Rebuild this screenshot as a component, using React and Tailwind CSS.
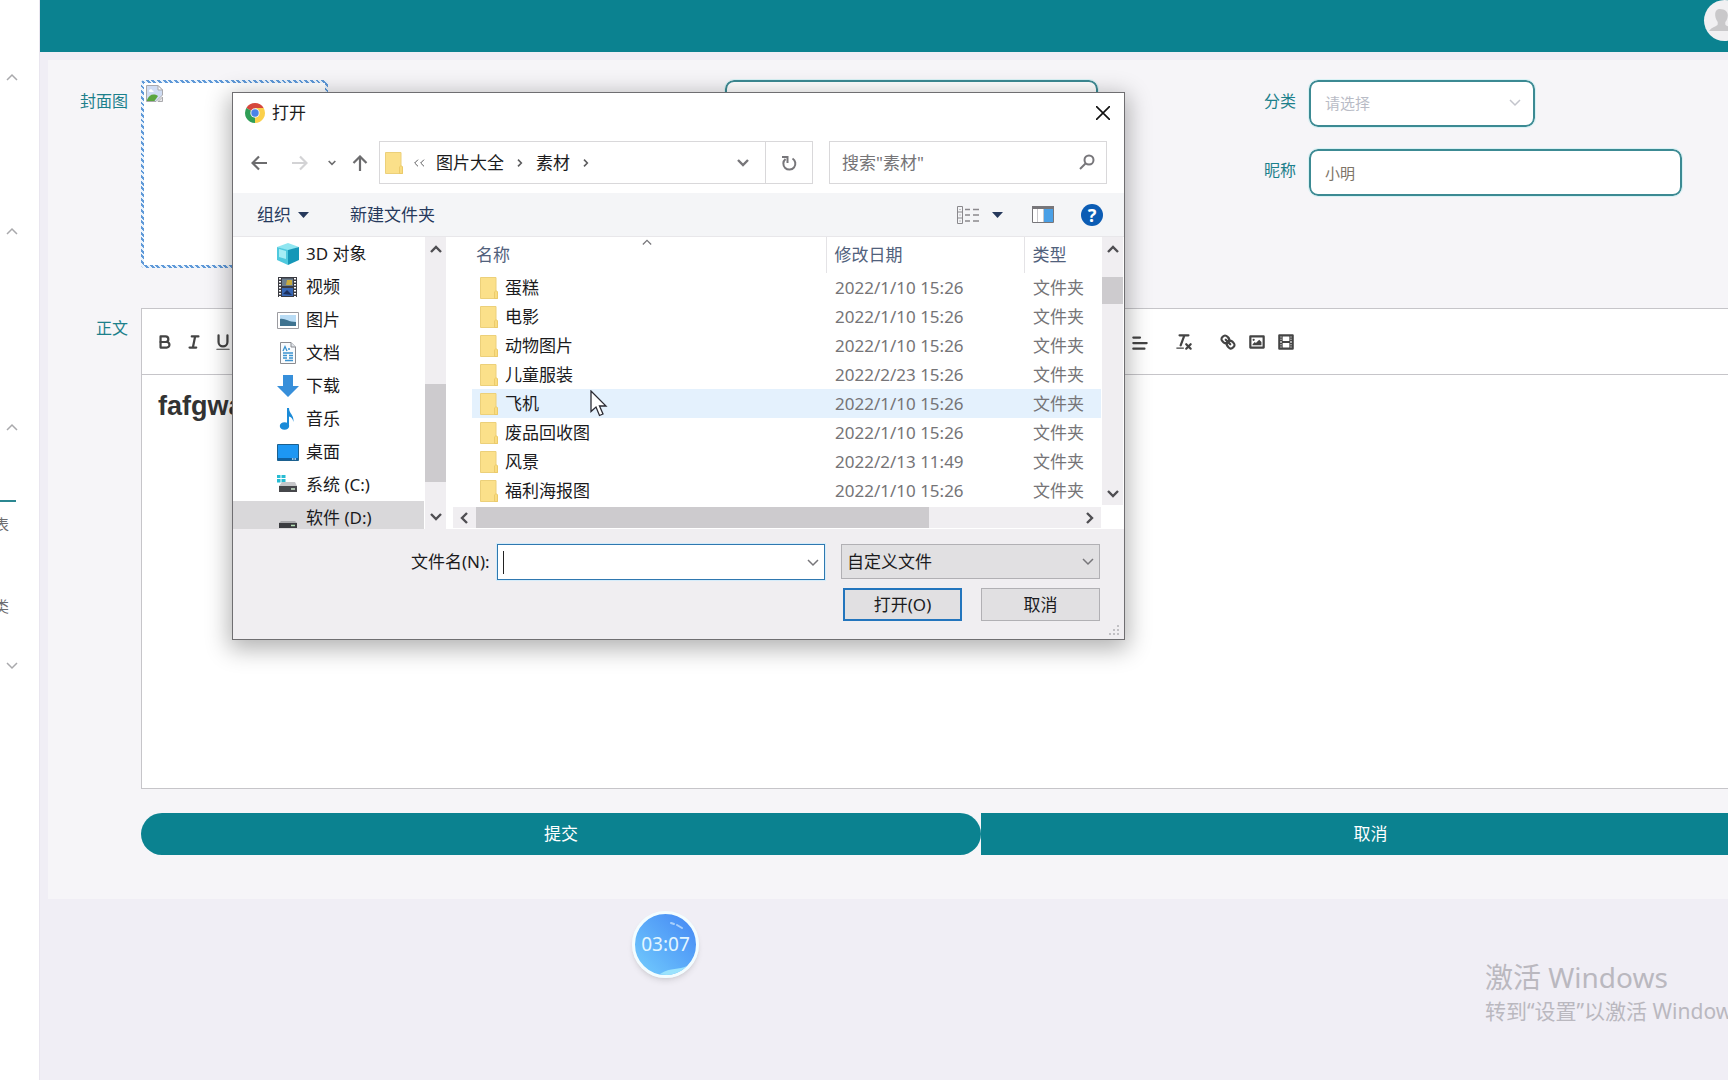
import clsx from 'clsx';

const treeItems = [
  { name: '3D 对象', icon: 'cube' },
  { name: '视频', icon: 'video' },
  { name: '图片', icon: 'picture' },
  { name: '文档', icon: 'doc' },
  { name: '下载', icon: 'download' },
  { name: '音乐', icon: 'music' },
  { name: '桌面', icon: 'desktop' },
  { name: '系统 (C:)', icon: 'system' },
  { name: '软件 (D:)', icon: 'disk', active: true },
];

const files = [
  { name: '蛋糕', date: '2022/1/10 15:26' },
  { name: '电影', date: '2022/1/10 15:26' },
  { name: '动物图片', date: '2022/1/10 15:26' },
  { name: '儿童服装', date: '2022/2/23 15:26' },
  { name: '飞机', date: '2022/1/10 15:26', hovered: true },
  { name: '废品回收图', date: '2022/1/10 15:26' },
  { name: '风景', date: '2022/2/13 11:49' },
  { name: '福利海报图', date: '2022/1/10 15:26' },
];

const App = () => {
  return (
    <div className="relative flex min-h-screen overflow-hidden bg-[#f0eef5] font-['Noto_Sans','Noto_Sans_CJK_SC',sans-serif]">
      <Sidebar />

      <main className="-mr-8 flex-1 min-w-0">
        <header className="h-[52px] bg-[#0b8290] flex justify-end px-[15px]">
          <button aria-label="user" className="size-[41px] rounded-full bg-[#f1f0f2] overflow-hidden">
            <svg viewBox="0 0 41 41" className="size-full" fill="#c9c8ca">
              <path d="M16 9c-4 0-5 3-4.800 6.500.2 3 1.500 5 2.500 6.500v2.500c-1 2-6 2.500-8.700 6.500h26c-2.700-4-8.700-4.500-9.700-6.500V22c1.500-1.500 2.300-3.500 2.500-6.500C24 12 21 9 16 9z" />
            </svg>
          </button>
        </header>

        {/* form */}
        <form className="ml-2 -mr-10 mt-2 pt-5 pb-11 bg-[#f6f5f8]">
          <div className="grid grid-cols-3 items-start">
            <Field label="封面图" id="cover">
              <button
                id="cover"
                type="button"
                className="h-[188px] w-[187px] p-[3px] rounded bg-[repeating-linear-gradient(45deg,#5f99d8_0_2px,#eaf3fc_2px_4px)]"
              >
                <span className="flex size-full items-start bg-white p-[2px]">
                  <BrokenImage />
                </span>
              </button>
            </Field>

            <div className="pl-[93px]">
              <input aria-label="标题" className="h-[47px] w-[373px] rounded-[9px] border-2 border-[#3c8a93] bg-white outline outline-[#d8f2f5]" />
            </div>

            <div className="flex flex-col gap-[22px]">
              <Field label="分类" id="category">
                <div className="relative w-[226px]">
                  <select
                    id="category"
                    className="h-[47px] w-full appearance-none rounded-[9px] border-2 border-[#3c8a93] bg-white px-[14px] text-[15px] text-[#b9bcc6] outline outline-[#d8f2f5]"
                  >
                    <option>请选择</option>
                  </select>
                  <Chevron dir="down" className="absolute right-[14px] top-[17px] size-3 text-[#c3c5cc]" />
                </div>
              </Field>
              <Field label="昵称" id="nickname">
                <input
                  id="nickname"
                  defaultValue="小明"
                  className="h-[47px] w-[373px] rounded-[9px] border-2 border-[#3c8a93] bg-white px-[14px] text-[15px] text-[#7d7467] outline outline-[#d8f2f5]"
                />
              </Field>
            </div>
          </div>

          {/* editor */}
          <div className="mt-10 flex">
            <span className="h-10 w-[93px] shrink-0 pr-[13px] text-right text-base leading-10 text-[#1c808b]">正文</span>
            <div className="flex-1 border border-[#c6c5c9] bg-white">
              <Toolbar />
              <div className="h-[413px] px-4 py-[15px] font-['Liberation_Sans',sans-serif] text-[27px] leading-8 font-bold text-[#333]">
                fafgwa
              </div>
            </div>
          </div>

          <div className="mt-6 flex pl-[93px] pr-10 text-[17px] text-white">
            <button type="submit" className="h-[42px] w-[840px] rounded-full bg-[#0b8290]">提交</button>
            <button type="button" className="h-[42px] flex-1 bg-[#0b8290]">取消</button>
          </div>
        </form>
      </main>

      <FileDialog />

      {/* recorder timer */}
      <div className="absolute left-[632px] top-[911px] size-[67px] rounded-full border-[3px] border-[#f3fdff] bg-linear-to-tr from-[#74cdfd] to-[#4585f3] shadow-md">
        <svg viewBox="0 0 61 61" className="absolute inset-0 size-full" fill="none">
          <path d="M25 60C36 53 44 56 52 52C46 58 36 63 25 60Z" fill="#9be3fd" />
          <path d="M36 9l3 1M42 11l5 3" stroke="#a9d0fc" strokeWidth="2" strokeLinecap="round" />
        </svg>
        <span className="relative flex size-full items-center justify-center text-[19px] text-[#e2f6ff]">03:07</span>
      </div>

      {/* windows watermark */}
      <div className="absolute left-[1485px] top-[959px] whitespace-nowrap text-[#bab8bf]">
        <p className="text-[28px] leading-9">激活 Windows</p>
        <p className="text-[21px] leading-8">转到“设置”以激活 Windows。</p>
      </div>
    </div>
  )
}

export default App


const Field = ({ label, id, children }) => {
  return (
    <div className="flex items-start">
      <label htmlFor={id} className="h-[42px] w-[93px] shrink-0 pr-[13px] text-right text-base leading-[42px] text-[#1c808b]">
        {label}
      </label>
      {children}
    </div>
  )
}

const Sidebar = () => {
  return (
    <nav className="flex w-10 shrink-0 flex-col border-r border-[#e9e6ef] bg-white text-[#a9a9ac]">
      <SideToggle dir="up" className="h-[154px]" />
      <SideToggle dir="up" className="h-[154px]" />
      <SideToggle dir="up" className="h-[192px] pt-[46px]" />
      <span className="h-[2px] w-4 bg-[#2b8791]" />
      <SideLink text="表" className="h-11" />
      <SideLink text="类" className="h-[120px]" />
      <SideToggle dir="down" className="-mt-6 h-12" />
    </nav>
  )
}

const SideToggle = ({ dir, className }) => (
  <button aria-label={dir} className={clsx('flex items-center pl-[6px]', className)}>
    <Chevron dir={dir} className="size-3" />
  </button>
)

const SideLink = ({ text, className }) => (
  <a href="#" className={clsx('flex w-[9px] items-center justify-end overflow-hidden text-[15px] text-[#6d6d70]', className)}>
    <span className="shrink-0">{text}</span>
  </a>
)

const Toolbar = () => {
  return (
    <div className="flex h-[66px] items-center border-b border-[#c6c5c9] px-2">
      <ToolButton name="bold">
        <path d="M5,4H9.500A2.500,2.500,0,0,1,12,6.500v0A2.500,2.500,0,0,1,9.500,9H5V4Z" />
        <path d="M5,9h5.500A2.500,2.500,0,0,1,13,11.500v0A2.500,2.500,0,0,1,10.500,14H5V9Z" />
      </ToolButton>
      <ToolButton name="italic">
        <path d="M7,4H13M5,14H11M8,14L10,4" />
      </ToolButton>
      <ToolButton name="underline">
        <path d="M5,3V9a4,4,0,0,0,4,4H9a4,4,0,0,0,4-4V3" />
        <rect x="3" y="15" width="12" height="1" rx=".5" fill="#444" stroke="none" />
      </ToolButton>
      <span className="w-[888px] shrink-0" />
      <ToolButton name="align">
        <path d="M3,10H15M3,15H13M3,5H9" />
      </ToolButton>
      <span className="w-[15px]" />
      <ToolButton name="clean">
        <path d="M5,3H13M6,12L9.350,3M11,11L15,15M15,11L11,15" />
        <rect x="2" y="14" width="7" height="1" rx=".5" fill="#444" stroke="none" />
      </ToolButton>
      <span className="w-[15px]" />
      <ToolButton name="link">
        <path d="M7,7L11,11" />
        <path d="M8.900,4.577a3.476,3.476,0,0,1,.36,4.679A3.476,3.476,0,0,1,4.577,8.900C3.185,7.500,2.035,6.400,4.217,4.217S7.500,3.185,8.900,4.577Z" />
        <path d="M13.423,9.100a3.476,3.476,0,0,0-4.679-.36,3.476,3.476,0,0,0,.36,4.679c1.392,1.392,2.500,2.542,4.679.36S14.815,10.500,13.423,9.100Z" />
      </ToolButton>
      <ToolButton name="image">
        <rect x="3" y="4" width="12" height="10" />
        <circle cx="6" cy="7" r="1" fill="#444" stroke="none" />
        <path d="M5 12V11L7 9L8 10L11 7L13 9V12Z" fill="#444" stroke="none" />
      </ToolButton>
      <ToolButton name="video">
        <rect x="3" y="3" width="12" height="12" />
        <path d="M5 3h1v12H5zM12 3h1v12h-1zM5 8h8v2H5zM3 5h3v1H3zM3 7h3v1H3zM3 10h3v1H3zM3 12h3v1H3zM12 5h3v1h-3zM12 7h3v1h-3zM12 10h3v1h-3zM12 12h3v1h-3z" fill="#444" stroke="none" />
      </ToolButton>
    </div>
  )
}

const ToolButton = ({ name, children }) => (
  <button type="button" aria-label={name} className="flex w-[29px] shrink-0 justify-center">
    <svg viewBox="0 0 18 18" className="size-5" fill="none" stroke="#444" strokeWidth="2" strokeLinecap="round" strokeLinejoin="round">
      {children}
    </svg>
  </button>
)

const FileDialog = () => {
  return (
    <div
      role="dialog"
      aria-label="打开"
      className="absolute left-[232px] top-[92px] flex w-[893px] flex-col border border-[#6f6e71] bg-white text-[17px] leading-6 text-[#1b1b1d] shadow-[0_6px_22px_3px_rgba(0,0,0,0.3)]"
    >
      {/* title bar */}
      <div className="flex h-[39px] items-center gap-[7px] pl-3 pr-[14px]">
        <ChromeLogo />
        <span className="flex-1">打开</span>
        <button aria-label="关闭">
          <svg viewBox="0 0 14 14" className="size-[14px]" stroke="#111" strokeWidth="1.600">
            <path d="M0 0L14 14M14 0L0 14" />
          </svg>
        </button>
      </div>

      {/* address row */}
      <div className="flex h-[61px] items-center pl-[18px] pr-[17px]">
        <div className="flex w-32 items-center">
          <button aria-label="后退"><Arrow className="size-4 text-[#6c6c6e]" /></button>
          <button aria-label="前进" className="ml-[25px]"><Arrow className="size-4 rotate-180 text-[#d3d3d5]" /></button>
          <button aria-label="最近" className="ml-5"><Chevron dir="down" className="size-2 text-[#6c6c6e]" bold /></button>
          <button aria-label="向上" className="ml-4"><Arrow className="size-4 rotate-90 text-[#6c6c6e]" /></button>
        </div>
        <div className="flex h-[43px] flex-1 items-center border border-[#d9d8da]">
          <Folder className="ml-[5px] mr-[9px]" />
          <Chevron dir="left" className="-mr-[2px] size-2 text-[#5c5c5e]" />
          <Chevron dir="left" className="size-2 text-[#5c5c5e]" />
          <span className="ml-[10px]">图片大全</span>
          <Chevron dir="right" className="mx-3 size-2 text-[#5c5c5e]" bold />
          <span>素材</span>
          <Chevron dir="right" className="mx-3 size-2 text-[#5c5c5e]" bold />
          <button aria-label="展开" className="ml-auto mr-4"><Chevron dir="down" className="size-3 text-[#77767a]" bold /></button>
          <button aria-label="刷新" className="flex h-full w-[47px] items-center justify-center border-l border-[#d9d8da]">
            <svg viewBox="0 0 16 16" className="size-4" fill="none" stroke="#77767a" strokeWidth="2">
              <path d="M11.500 3.500A6 6 0 1 1 4.500 4M1 2H6.500V8" />
            </svg>
          </button>
        </div>
        <div className="relative ml-4 w-[278px]">
          <input
            aria-label="搜索"
            placeholder={'搜索"素材"'}
            className="h-[43px] w-full border border-[#d9d8da] px-3 placeholder:text-[#757477] placeholder:opacity-100"
          />
          <svg viewBox="0 0 16 16" className="absolute right-3 top-[13px] size-4" fill="none" stroke="#77767a" strokeWidth="2">
            <circle cx="10" cy="6" r="4.500" />
            <path d="M6.500 9.500L1 15" />
          </svg>
        </div>
      </div>

      {/* command bar */}
      <div className="flex h-[44px] items-center border-b border-[#e8e7ea] bg-[#f4f5f7] pl-6 pr-[21px] text-[#26395c]">
        <button className="flex items-center gap-[7px]">组织 <Triangle /></button>
        <button className="ml-[41px] mr-auto">新建文件夹</button>
        <button aria-label="视图" className="flex items-center gap-3">
          <svg viewBox="0 0 24 20" className="h-5 w-6" fill="none" stroke="#8a898d">
            <path d="M1.500 1.500h5v17h-5zM1.500 7h5M1.500 13h5M3.500 4.500h1M3.500 10h1M3.500 16h1" />
            <path d="M9 4.500h5M17 4.500h6M9 10h5M17 10h6M9 16h5M17 16h6" strokeWidth="1.500" />
          </svg>
          <Triangle />
        </button>
        <button aria-label="预览窗格" className="ml-[29px]">
          <svg viewBox="0 0 22 17" className="h-[17px] w-[22px]">
            <path d="M.5.5h21v16H.5z" fill="#fff" stroke="#77767a" />
            <path d="M0 0h22v3H0z" fill="#77767a" />
            <path d="M5.500 3v13M11.500 3v13" stroke="#c9c8cc" />
            <path d="M12 3h9v13h-9z" fill="#4aa0e6" />
          </svg>
        </button>
        <button aria-label="帮助" className="ml-[27px] size-[22px] rounded-full bg-[#0b5cb4] text-lg leading-[22px] font-bold text-white">?</button>
      </div>

      {/* body */}
      <div className="flex h-[292px]">
        <ul className="w-[191px] overflow-hidden">
          {treeItems.map((item) => (
            <li key={item.name} className={clsx('flex h-[33px] items-center gap-[7px] pl-11', item.active && 'bg-[#d9d8da]')}>
              <TreeIcon name={item.icon} />
              <span>{item.name}</span>
            </li>
          ))}
        </ul>

        <div className="mr-[7px] ml-px flex w-[21px] flex-col items-center bg-[#f0eef1] pt-[6px] pb-[6px]">
          <Chevron dir="up" className="size-3 text-[#4f4e52]" bold />
          <div className="mt-auto mb-[29px] h-[98px] w-full bg-[#cdcbce]" />
          <Chevron dir="down" className="size-3 text-[#4f4e52]" bold />
        </div>

        <div className="flex-1">
          <div className="flex">
            <div className="relative flex-1 pl-[19px]">
              <Chevron dir="up" className="absolute left-[189px] top-0 size-[10px] text-[#77767a]" />
              <table className="w-full table-fixed">
                <thead>
                  <tr className="h-9 text-left text-[#51617c]">
                    <th className="pl-1 font-normal">名称</th>
                    <th className="w-[198px] border-l border-[#e4e3e6] pl-2 font-normal">修改日期</th>
                    <th className="w-[77px] border-l border-[#e4e3e6] pl-2 font-normal">类型</th>
                  </tr>
                </thead>
                <tbody>
                  {files.map((file) => (
                    <tr key={file.name} className={clsx('h-[29px]', file.hovered && 'bg-[#e4f1fd]')}>
                      <td className="py-0 pl-2">
                        <div className="flex items-center gap-[7px]">
                          <Folder />
                          {file.name}
                        </div>
                      </td>
                      <td className="py-0 pl-[9px] text-[#757477]">{file.date}</td>
                      <td className="py-0 pl-[9px] text-[#757477]">文件夹</td>
                    </tr>
                  ))}
                </tbody>
              </table>
            </div>
            <div className="mx-px flex w-[21px] flex-col items-center bg-[#f0eef1] pt-[6px] pb-[5px]">
              <Chevron dir="up" className="size-3 text-[#4f4e52]" bold />
              <div className="mt-[22px] mb-auto h-[27px] w-full bg-[#cdcbce]" />
              <Chevron dir="down" className="size-3 text-[#4f4e52]" bold />
            </div>
          </div>
          <div className="mt-[2px] mr-[23px] flex h-[21px] items-center bg-[#f0eef1] px-[5px]">
            <Chevron dir="left" className="size-3 text-[#4f4e52]" bold />
            <div className="ml-[6px] mr-auto h-full w-[453px] bg-[#cdcbce]" />
            <Chevron dir="right" className="size-3 text-[#4f4e52]" bold />
          </div>
        </div>
      </div>

      {/* footer */}
      <div className="relative bg-[#f0eef1] pt-[15px] pr-6 pb-[18px] pl-[178px]">
        <div className="flex items-start">
          <label htmlFor="filename" className="w-[86px] leading-[35px]">文件名(N):</label>
          <div className="relative flex-1">
            <input id="filename" className="h-9 w-full border border-[#2f78b0] bg-white px-2 outline outline-[#d5ecfa]" />
            <span className="absolute left-[6px] top-[7px] h-[23px] w-px bg-[#222]" />
            <Chevron dir="down" className="absolute right-[6px] top-[13px] size-3 text-[#77767a]" />
          </div>
          <div className="relative ml-4 w-[259px]">
            <select aria-label="文件类型" className="h-[35px] w-full appearance-none border border-[#b1b0b4] bg-[#e1e0e2] px-[5px] leading-6">
              <option>自定义文件</option>
            </select>
            <Chevron dir="down" className="absolute right-[6px] top-3 size-3 text-[#77767a]" />
          </div>
        </div>
        <div className="mt-2 flex justify-end gap-[19px]">
          <button className="h-[33px] w-[119px] border-2 border-[#2375bd] bg-[#e1e0e2]">打开(O)</button>
          <button className="h-[33px] w-[119px] border border-[#b1b0b4] bg-[#e1e0e2]">取消</button>
        </div>
        <svg viewBox="0 0 12 12" className="absolute right-1 bottom-[2px] size-3" fill="#c1c0c4">
          <path d="M9 0h2v2H9zM5 4h2v2H5zM9 4h2v2H9zM1 8h2v2H1zM5 8h2v2H5zM9 8h2v2H9z" />
        </svg>
      </div>

      <svg viewBox="0 0 18 28" className="absolute left-[357px] top-[297px] h-7 w-[18px]" fill="#fff" stroke="#2b2b33" strokeWidth="1.300">
        <path d="M1 1V21.500L6 17L9.500 25.500L13 24L9.500 16H16Z" />
      </svg>
    </div>
  )
}

const chevronPaths = {
  up: 'M1 9L6 4L11 9',
  down: 'M1 3L6 8L11 3',
  left: 'M9 1L4 6L9 11',
  right: 'M3 1L8 6L3 11',
};

const Chevron = ({ dir, className, bold }) => (
  <svg viewBox="0 0 12 12" className={clsx('shrink-0', className)} fill="none" stroke="currentColor" strokeWidth={bold ? 2.4 : 1.5}>
    <path d={chevronPaths[dir]} />
  </svg>
)

const Triangle = () => (
  <svg viewBox="0 0 11 6" className="h-[6px] w-[11px]" fill="#26395c">
    <path d="M0 0H11L5.500 6Z" />
  </svg>
)

const Arrow = ({ className }) => (
  <svg viewBox="0 0 16 16" className={className} fill="none" stroke="currentColor" strokeWidth="2.200">
    <path d="M16 8H1.500M8 1.500L1.500 8L8 14.500" />
  </svg>
)

const Folder = ({ className }) => (
  <svg viewBox="0 0 18 22" className={clsx('h-[22px] w-[18px] shrink-0', className)}>
    <path d="M.5.5H16V13.500L17.500 15V21.500H.5Z" fill="#fbe08a" stroke="#ecd07a" />
    <path d="M14.500 21.500V15L16 13.500L17.500 15V21.500Z" fill="#f9dc80" stroke="#e8c766" strokeWidth=".8" />
  </svg>
)

const ChromeLogo = () => (
  <svg viewBox="0 0 20 20" className="size-5">
    <path d="M10 10L1.340 5A10 10 0 0 1 18.660 5Z" fill="#d5473c" />
    <path d="M10 10L1.340 5A10 10 0 0 0 10 20L14.500 12Z" fill="#2f9e56" />
    <path d="M10 10L10 20A10 10 0 0 0 18.660 5H10Z" fill="#fbd04b" />
    <circle cx="10" cy="10" r="4.700" fill="#f3f3f3" />
    <circle cx="10" cy="10" r="3.700" fill="#4a83e8" />
  </svg>
)

const BrokenImage = () => (
  <svg viewBox="0 0 17 17" className="size-[17px]">
    <path d="M.5.5H12L16.500 5V10L10 16.500H.5Z" fill="#cfdcf3" stroke="#a9a9ad" />
    <path d="M12 .5V5H16.500Z" fill="#fff" stroke="#a9a9ad" />
    <path d="M3 6C3 4 6 3.500 6.500 5.500C8 5.500 8 7 7 7H3.500Z" fill="#fff" />
    <path d="M1 15C3 10 7 8 12 11L8.500 16H1Z" fill="#5aa63f" />
    <path d="M16.500 12V16.500H12Z" fill="#e8e8ea" stroke="#a9a9ad" />
  </svg>
)

const TreeIcon = ({ name }) => (
  <svg viewBox="0 0 22 22" className="size-[22px] shrink-0">
    {name === 'cube' && (
      <>
        <path d="M0 4L11 0L22 4L11 8Z" fill="#8fe6f1" />
        <path d="M0 4L11 7V22L0 17Z" fill="#4fc9de" />
        <path d="M22 4L11 7V22L22 17Z" fill="#1597b8" />
        <path d="M2 6L9 8V16L2 14Z" fill="#a5edf5" />
      </>
    )}
    {name === 'video' && (
      <>
        <path d="M1 1H20V21H1Z" fill="#3a3b42" />
        <path d="M5 2.500H16V10H5Z" fill="#6d7f8e" />
        <path d="M5 12H16V20H5Z" fill="#3867b4" />
        <path d="M10 4H15V9H9Z" fill="#c9ab3c" />
        <path d="M6 18L10 14L15 19Z" fill="#1c2f5c" />
        <path d="M3 2V21M18 2V21" stroke="#fff" strokeWidth="2" strokeDasharray="1.500 1.500" />
      </>
    )}
    {name === 'picture' && (
      <>
        <path d="M.5 3.500H21.500V19.500H.5Z" fill="#fff" stroke="#9c9ca1" />
        <path d="M3 6H19V17H3Z" fill="#b9dcf5" />
        <path d="M3 10C8 9 11 13 19 13V17H3Z" fill="#3f7390" />
      </>
    )}
    {name === 'doc' && (
      <>
        <path d="M3.500.5H14L18.500 5V21.500H3.500Z" fill="#f9fbfd" stroke="#8b8c91" />
        <path d="M14 .5V5H18.500" fill="#dfe4ea" stroke="#8b8c91" />
        <path d="M6 9L8 4.500L10 9M11 7H13M6 11H16M6 13.500H10M12 13.500H16M6 16H10M12 16H16M8 18.500H16" stroke="#3b93d0" strokeWidth="1.300" fill="none" />
      </>
    )}
    {name === 'download' && <path d="M6 0H16V11H22L11 22L0 11H6Z" fill="#378fda" />}
    {name === 'music' && (
      <>
        <path d="M10 0H12C12 6 17 6 16.500 14C15.500 10 14 9 12 8.500V18H10Z" fill="#1b8bd8" />
        <ellipse cx="7.500" cy="18" rx="4.700" ry="3.800" fill="#1b8bd8" />
      </>
    )}
    {name === 'desktop' && (
      <>
        <path d="M.5 3.500H21.500V19.500H.5Z" fill="#1d97f3" stroke="#1b608f" />
        <path d="M1 18H21" stroke="#0d4f86" strokeWidth="1.500" />
        <path d="M15 18H20" stroke="#bfe3fb" strokeWidth="1.500" strokeDasharray="1.500 1" />
      </>
    )}
    {name === 'system' && (
      <>
        <path d="M0 1H3.500V4H0ZM4.500 1H8.500V4H4.500ZM0 5H3.500V8.500H0ZM4.500 5H8.500V8.500H4.500Z" fill="#27bcd3" />
        <path d="M5 8H18L20 12H2Z" fill="#c6c6c9" />
        <path d="M2 12H20V18H2Z" fill="#46474b" />
        <path d="M14 15H18" stroke="#cfe8cf" strokeWidth="1.500" />
      </>
    )}
    {name === 'disk' && (
      <>
        <path d="M4 14H18L20 16H2Z" fill="#a9a9ac" />
        <path d="M2 16H20V21H2Z" fill="#3b3c40" />
        <path d="M14 18.500H18" stroke="#b6e0b6" strokeWidth="1.500" />
      </>
    )}
  </svg>
)
